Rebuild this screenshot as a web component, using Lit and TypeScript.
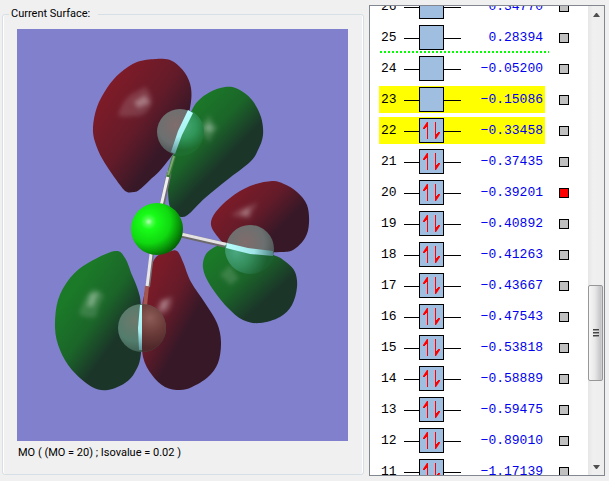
import { LitElement, html, svg, css } from "lit";
import { customElement, property, state } from "lit/decorators.js";
import { classMap } from "lit/directives/class-map.js";

type Point = [number, number];

/** Closed smooth outline through the given points. */
function outline(points: Point[]): string {
  const n = points.length;
  const at = (i: number) => points[(i + n) % n];
  let d = `M${at(0)[0]} ${at(0)[1]}`;
  for (let i = 0; i < n; i++) {
    const [a, b, c, e] = [at(i - 1), at(i), at(i + 1), at(i + 2)];
    const c1 = [b[0] + (c[0] - a[0]) / 6, b[1] + (c[1] - a[1]) / 6];
    const c2 = [c[0] - (e[0] - b[0]) / 6, c[1] - (e[1] - b[1]) / 6];
    d += `C${c1[0].toFixed(1)} ${c1[1].toFixed(1)} ${c2[0].toFixed(1)} ${c2[1].toFixed(1)} ${c[0]} ${c[1]}`;
  }
  return d + "Z";
}

const LOBES: Record<string, string> = {
  redTop: outline([
    [155, 59], [165, 59], [174, 62], [185, 73], [191, 88], [190, 108], [181, 141], [163, 167], [150, 180],
    [139, 190], [134, 192], [127, 192], [120, 185], [103, 160], [95, 142], [93, 127], [97, 107], [107, 88],
    [120, 73], [137, 62],
  ]),
  greenTop: outline([
    [225, 87], [238, 89], [252, 100], [261, 117], [263, 135], [258, 150], [250, 162], [227, 180], [205, 198],
    [190, 213], [183, 217], [177, 215], [170, 207], [168, 190], [169, 172], [174, 153], [182, 133], [191, 112],
    [198, 101], [210, 92],
  ]),
  redRight: outline([
    [272, 181], [284, 184], [297, 192], [307, 205], [309, 223], [305, 238], [293, 250], [280, 252], [253, 252],
    [227, 245], [218, 237], [211, 225], [215, 213], [230, 198], [250, 186],
  ]),
  greenRight: outline([
    [217, 246], [226, 245], [245, 251], [273, 255], [286, 262], [295, 272], [297, 287], [292, 305], [280, 317],
    [260, 323], [243, 320], [227, 307], [210, 285], [203, 268], [206, 254],
  ]),
  greenLow: outline([
    [115, 251], [125, 258], [132, 275], [138, 290], [141, 307], [141, 353], [135, 372], [125, 383], [108, 390],
    [92, 387], [72, 370], [60, 350], [55, 328], [58, 300], [70, 278], [88, 263],
  ]),
  redLow: outline([
    [168, 252], [177, 251], [183, 262], [191, 282], [205, 303], [217, 323], [221, 342], [218, 363], [208, 377],
    [192, 387], [180, 390], [165, 387], [152, 375], [143, 357], [142, 330], [142, 307], [147, 283], [153, 262],
    [160, 254],
  ]),
};

@customElement("orbital-view")
class OrbitalView extends LitElement {
  static styles = css`
    :host {
      display: flex;
      background: #8080cc;
    }
    svg {
      flex: 1;
      width: 100%;
      min-width: 0;
      min-height: 0;
    }
  `;

  render() {
    const shade = (id: string, from: string, mid: string, to: string, line: number[]) => svg`
      <linearGradient id=${id} gradientUnits="userSpaceOnUse" x1=${line[0]} y1=${line[1]} x2=${line[2]} y2=${line[3]}>
        <stop offset="0" stop-color=${from}></stop>
        <stop offset="0.55" stop-color=${mid}></stop>
        <stop offset="1" stop-color=${to}></stop>
      </linearGradient>`;
    const RED = ["#7d1b28", "#641b29", "#371827"] as const;
    const GREEN = ["#1b7a28", "#1b6529", "#1b3529"] as const;
    return html`
      <svg viewBox="17 29 331 412" role="img" aria-label="Molecular orbital surface">
        <defs>
          ${shade("g-redTop", ...RED, [112, 88, 174, 133])}
          ${shade("g-greenTop", ...GREEN, [187, 108, 233, 152])}
          ${shade("g-redRight", ...RED, [230, 194, 272, 236])}
          ${shade("g-greenRight", ...GREEN, [215, 252, 262, 304])}
          ${shade("g-greenLow", ...GREEN, [74, 288, 126, 326])}
          ${shade("g-redLow", ...RED, [146, 285, 196, 312])}
          <radialGradient id="chlorine" cx="0.34" cy="0.36" r="0.7">
            <stop offset="0" stop-color="#b8ffb8"></stop>
            <stop offset="0.1" stop-color="#50ff50"></stop>
            <stop offset="0.22" stop-color="#18fc18"></stop>
            <stop offset="0.6" stop-color="#10d810"></stop>
            <stop offset="0.85" stop-color="#089008"></stop>
            <stop offset="1" stop-color="#056005"></stop>
          </radialGradient>
          <radialGradient id="hydrogen" cx="0.4" cy="0.35" r="0.65">
            <stop offset="0" stop-color="#806c6c"></stop>
            <stop offset="0.6" stop-color="#6c7070"></stop>
            <stop offset="1" stop-color="#4d5556"></stop>
          </radialGradient>
          <radialGradient id="hydrogenLow" cx="0.35" cy="0.35" r="0.7">
            <stop offset="0" stop-color="#6c7a6c"></stop>
            <stop offset="0.6" stop-color="#527c6c"></stop>
            <stop offset="1" stop-color="#3b5a4d"></stop>
          </radialGradient>
          <radialGradient id="veilTop" gradientUnits="userSpaceOnUse" cx="184" cy="126" r="24">
            <stop offset="0" stop-color="#45a874"></stop>
            <stop offset="0.5" stop-color="#31965a"></stop>
            <stop offset="1" stop-color="#1e6e30"></stop>
          </radialGradient>
          <radialGradient id="veilRight" gradientUnits="userSpaceOnUse" cx="236" cy="252" r="32">
            <stop offset="0" stop-color="#4aa880"></stop>
            <stop offset="0.5" stop-color="#338c5a"></stop>
            <stop offset="1" stop-color="#1d6030"></stop>
          </radialGradient>
          <radialGradient id="veilLow" gradientUnits="userSpaceOnUse" cx="150" cy="318" r="30">
            <stop offset="0" stop-color="#8d5c58"></stop>
            <stop offset="0.5" stop-color="#6c3d3a"></stop>
            <stop offset="1" stop-color="#50282a"></stop>
          </radialGradient>
          <filter id="soft" x="-20%" y="-20%" width="140%" height="140%">
            <feGaussianBlur stdDeviation="2"></feGaussianBlur>
          </filter>
          <linearGradient id="edge" x1="0" y1="0" x2="0" y2="1">
            <stop offset="0" stop-color="#b8ffff"></stop>
            <stop offset="0.6" stop-color="#a8eef0"></stop>
            <stop offset="1" stop-color="#5f9096"></stop>
          </linearGradient>
          <linearGradient id="edgeRight" x1="0" y1="0" x2="1" y2="0">
            <stop offset="0" stop-color="#b8ffff"></stop>
            <stop offset="0.6" stop-color="#a0e4e8"></stop>
            <stop offset="1" stop-color="#4f8584"></stop>
          </linearGradient>
          <clipPath id="c-greenTop"><path d=${LOBES.greenTop}></path></clipPath>
          <clipPath id="c-greenRight"><path d=${LOBES.greenRight}></path></clipPath>
          <clipPath id="c-redLow"><path d=${LOBES.redLow}></path></clipPath>
        </defs>

        ${Object.entries(LOBES).map(([id, d]) => svg`<path d=${d} fill="url(#g-${id})"></path>`)}

        <g fill="#fff" filter="url(#soft)">
          <g fill-opacity="0.14">
            <path d="M145 87Q152 93 152 103Q146 118 134 116Q122 118 118 115Q122 102 130 95Z"></path>
            <path d="M209 115Q213 123 218 128Q213 133 210 142Q203 135 197 130Q204 122 209 115Z"></path>
            <path d="M258 203Q253 210 250 218Q240 219 231 215Q242 206 258 203Z"></path>
            <path d="M230 265Q233 272 239 278Q234 283 230 285Q224 278 220 275Q226 269 230 265Z"></path>
            <path d="M93 289Q102 291 104 296Q98 307 96 317Q87 319 79 314Q85 294 93 289Z"></path>
            <path d="M172 296Q174 306 168 312Q160 318 150 320Q156 308 160 300Z"></path>
          </g>
          <g fill-opacity="0.3">
            <path d="M134 102L145 95L150 103L138 108Z"></path>
            <path d="M204 128L209 122L214 129L209 133Z"></path>
            <path d="M239 214L250 207L248 216Z"></path>
            <path d="M90 294L99 292L93 307L87 306Z"></path>
            <path d="M162 301L169 299L166 309L159 311Z"></path>
          </g>
        </g>

        <g fill="none">
          <path d="M162 206L169 173" stroke="#6f6d72" stroke-width="5"></path>
          <path d="M161 206L169 171" stroke="#eeeeee" stroke-width="3"></path>
          <path d="M168 177L174 156" stroke="#3d7a3a" stroke-width="4"></path>
          <path d="M168 175L174 156" stroke="#7da873" stroke-width="2"></path>
          <path d="M181 235L229 246" stroke="#6c696c" stroke-width="5"></path>
          <path d="M181 234L229 245" stroke="#e4e2e2" stroke-width="3"></path>
          <path d="M152 254L148 287" stroke="#77727a" stroke-width="4"></path>
          <path d="M151 254L147 287" stroke="#e8e6e6" stroke-width="3"></path>
          <path d="M147 286L145 306" stroke="#a3564f" stroke-width="4"></path>
        </g>

        <circle cx="180" cy="132" r="23" fill="url(#hydrogen)"></circle>
        <g clip-path="url(#c-greenTop)">
          <circle cx="180" cy="132" r="24" fill="url(#veilTop)"></circle>
        </g>
        <path d="M188 110L193 113L182 135L175 154L171 152L178 131Z" fill="url(#edge)"></path>

        <circle cx="250" cy="249" r="24" fill="url(#hydrogen)"></circle>
        <g clip-path="url(#c-greenRight)">
          <circle cx="250" cy="249" r="25" fill="url(#veilRight)"></circle>
        </g>
        <path d="M227 243L248 248L273 251L273 256L250 254L226 248Z" fill="url(#edgeRight)"></path>

        <circle cx="142" cy="328" r="24" fill="url(#hydrogenLow)"></circle>
        <g clip-path="url(#c-redLow)">
          <circle cx="142" cy="328" r="24" fill="url(#veilLow)"></circle>
        </g>
        <path d="M140 305L142 305L142 350L139 350L138 328Z" fill="url(#edge)"></path>

        <circle cx="157" cy="229" r="26" fill="url(#chlorine)"></circle>
      </svg>
    `;
  }
}

@customElement("orbital-levels")
class OrbitalLevels extends LitElement {
  @property({ type: Number }) selected = 20;

  static styles = css`
    :host {
      display: flex;
      box-sizing: border-box;
      border: 1px solid #828790;
      background: #fff;
      overflow: hidden;
    }
    .viewport {
      flex: 1;
      min-width: 0;
      overflow: hidden;
    }
    table {
      table-layout: fixed;
      width: 200px;
      margin: -15px 0 0 9px;
      border-collapse: separate;
      border-spacing: 0;
      font: 13px/27px "Liberation Mono", monospace;
      color: #000;
    }
    .col-number {
      width: 25px;
    }
    .col-level {
      width: 57px;
    }
    .col-energy {
      width: 84px;
    }
    th,
    td {
      height: 27px;
      padding: 0;
      border: 0 solid transparent;
      border-width: 2px 0;
      background-clip: padding-box;
      font-weight: normal;
      text-align: left;
      vertical-align: middle;
    }
    th {
      padding-left: 2px;
    }
    .energy {
      padding-right: 2px;
      text-align: right;
      color: #0000f0;
      white-space: nowrap;
    }
    .frontier .mark {
      background-color: #ff0;
    }
    .gap-above {
      background: repeating-linear-gradient(90deg, #0f0 0 2px, transparent 2px 4px) 1px 100% / 169px 2px no-repeat;
    }
    .level {
      display: block;
      width: 57px;
      height: 27px;
    }
    input {
      display: block;
      appearance: none;
      width: 10px;
      height: 10px;
      margin: 0 0 0 14px;
      border: 1px solid #000;
      border-radius: 0;
      background: #c0c0c0;
    }
    input:checked {
      background: #f00;
    }
    .scrollbar {
      display: flex;
      flex-direction: column;
      width: 16px;
      background: linear-gradient(90deg, #e6e6e6, #f0f0f0 30%, #eeeeee);
    }
    .arrow {
      display: flex;
      align-items: center;
      justify-content: center;
      height: 17px;
      padding: 0;
      border: 0;
      background: none;
    }
    .before {
      flex: 262;
    }
    .after {
      flex: 77;
    }
    .thumb {
      display: flex;
      flex-direction: column;
      align-items: center;
      justify-content: center;
      gap: 1px;
      box-sizing: border-box;
      width: 15px;
      height: 96px;
      padding: 0;
      border: 1px solid #979797;
      border-radius: 2px;
      background: linear-gradient(90deg, #f6f6f6, #e8e8e8 45%, #c4c4c8 90%, #d8d8da);
    }
    .grip {
      width: 6px;
      height: 2px;
      background: linear-gradient(#444 50%, #999 50%);
    }
  `;

  private level(occupied: boolean) {
    return html`<svg class="level" viewBox="0 0 57 27" aria-hidden="true">
      <path d="M0 14h15v1H0zM40 14h17v1H40z"></path>
      <rect x="15.5" y="1.5" width="24" height="24" fill="#a0bfe0" stroke="#000"></rect>
      ${occupied
        ? svg`<g fill="#f00">
            <path d="M23 5h1v17h-1z"></path>
            <path d="M23 5v5h-1v1h-1v1h-2v-1l2-3z"></path>
            <path d="M31 5h1v17h-1z"></path>
            <path d="M32 22v-5h1v-1h1v-1h2v1l-2 3z"></path>
          </g>`
        : null}
    </svg>`;
  }

  render() {
    return html`
      <div class="viewport">
        <table>
          <colgroup>
            <col class="col-number" />
            <col class="col-level" />
            <col class="col-energy" />
            <col />
          </colgroup>
          <tbody>
            ${ORBITALS.map(
              ([number, energy]) => html`
                <tr class=${classMap({ frontier: number === 23 || number === 22, "gap-above": number === 25 })}>
                  <th class="mark" scope="row">${number}</th>
                  <td class="mark">${this.level(number <= 22)}</td>
                  <td class="mark energy">${energy}</td>
                  <td>
                    <input
                      type="checkbox"
                      aria-label="Orbital ${number}"
                      .checked=${number === this.selected}
                      @change=${() => this.dispatchEvent(new CustomEvent("pick", { detail: number }))}
                    />
                  </td>
                </tr>
              `,
            )}
          </tbody>
        </table>
      </div>
      <div class="scrollbar">
        <button class="arrow" aria-label="Scroll up">
          <svg width="7" height="4" viewBox="0 0 7 4"><path d="M3 0h1l3 4H0z" fill="#505050"></path></svg>
        </button>
        <div class="before"></div>
        <button class="thumb" aria-label="Scroll position">
          <span class="grip"></span><span class="grip"></span><span class="grip"></span>
        </button>
        <div class="after"></div>
        <button class="arrow" aria-label="Scroll down">
          <svg width="7" height="4" viewBox="0 0 7 4"><path d="M0 0h7l-3 4H3z" fill="#505050"></path></svg>
        </button>
      </div>
    `;
  }
}

const ORBITALS: [number, string][] = [
  [26, "0.34770"],
  [25, "0.28394"],
  [24, "−0.05200"],
  [23, "−0.15086"],
  [22, "−0.33458"],
  [21, "−0.37435"],
  [20, "−0.39201"],
  [19, "−0.40892"],
  [18, "−0.41263"],
  [17, "−0.43667"],
  [16, "−0.47543"],
  [15, "−0.53818"],
  [14, "−0.58889"],
  [13, "−0.59475"],
  [12, "−0.89010"],
  [11, "−1.17139"],
];

@customElement("app-root")
class AppRoot extends LitElement {
  @state() private orbital = 20;

  static styles = css`
    :host {
      display: flex;
      gap: 5px;
      box-sizing: border-box;
      height: 100vh;
      padding: 5px 4px 5px 2px;
      background: #f0f0f0;
      color: #000;
      font: 11px/14px Roboto, "Liberation Sans", Arial, sans-serif;
    }
    fieldset {
      flex: 1;
      display: flex;
      flex-direction: column;
      min-width: 0;
      margin: 2px 0 1px;
      padding: 8px 15px 14px 14px;
      border: 1px solid #d5dfe5;
      border-radius: 3px;
      box-shadow: inset 1px 0 #fff, inset -1px 0 #fff;
    }
    legend {
      margin-left: -8px;
      padding: 0 8px 0 2px;
    }
    orbital-view {
      flex: 1;
      min-height: 0;
    }
    .caption {
      margin: 5px 0 0 1px;
      white-space: nowrap;
    }
    orbital-levels {
      flex: 0 0 236px;
    }
  `;

  render() {
    return html`
      <fieldset>
        <legend>Current Surface:</legend>
        <orbital-view></orbital-view>
        <div class="caption">MO ( (MO = ${this.orbital}) ; Isovalue = 0.02 )</div>
      </fieldset>
      <orbital-levels
        .selected=${this.orbital}
        @pick=${(e: CustomEvent<number>) => (this.orbital = e.detail)}
      ></orbital-levels>
    `;
  }
}
